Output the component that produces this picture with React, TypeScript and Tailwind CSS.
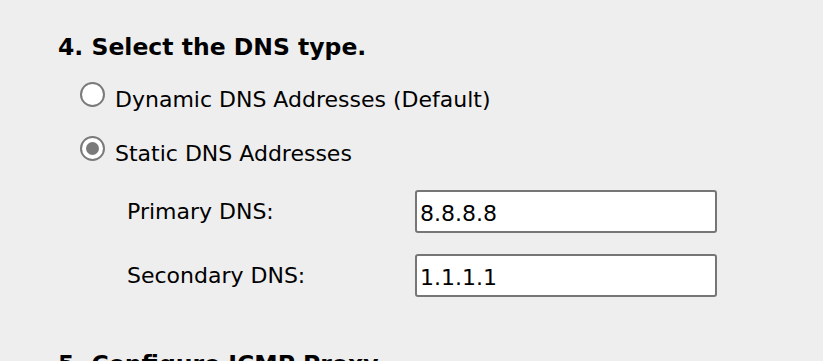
import React from "react";

function Radio({ checked }: { checked?: boolean }) {
  return (
    <div className="w-[25px] h-[25px] shrink-0 rounded-full border-2 border-[#7a7a7a] bg-white flex items-center justify-center">
      {checked && <div className="w-[13px] h-[13px] rounded-full bg-[#7a7a7a]" />}
    </div>
  );
}

export default function App() {
  const font = { fontFamily: '"DejaVu Sans", Verdana, sans-serif' };
  return (
    <div className="w-[823px] min-h-[361px] bg-[#eeeeee] text-black pl-[58px] pt-[32px]" style={font}>
      <h2 className="text-[23.5px] leading-[30px] font-bold">4. Select the DNS type.</h2>

      <div className="ml-[22px] mt-[20px] flex items-start gap-[10px]">
        <Radio />
        <span className="mt-[5px] text-[22px] leading-[26px]">Dynamic DNS Addresses (Default)</span>
      </div>
      <div className="ml-[22px] mt-[23px] flex items-start gap-[10px]">
        <Radio checked />
        <span className="mt-[5px] text-[22px] leading-[26px]">Static DNS Addresses</span>
      </div>

      <div className="ml-[69px] mt-[23px] flex flex-col gap-[21px]">
        <div className="flex items-center">
          <label className="w-[288px] text-[22px] leading-[26px]">Primary DNS:</label>
          <input
            defaultValue="8.8.8.8"
            className="w-[302px] h-[43px] border-2 border-[#767676] rounded-[3px] bg-white px-[3px] pt-[3px] pb-0 text-[22px] text-black outline-none"
            style={font}
          />
        </div>
        <div className="flex items-center">
          <label className="w-[288px] text-[22px] leading-[26px]">Secondary DNS:</label>
          <input
            defaultValue="1.1.1.1"
            className="w-[302px] h-[43px] border-2 border-[#767676] rounded-[3px] bg-white px-[3px] pt-[3px] pb-0 text-[22px] text-black outline-none"
            style={font}
          />
        </div>
      </div>

      <h2 className="mt-[52px] text-[23.5px] leading-[30px] font-bold">5. Configure ICMP Proxy</h2>
    </div>
  );
}
